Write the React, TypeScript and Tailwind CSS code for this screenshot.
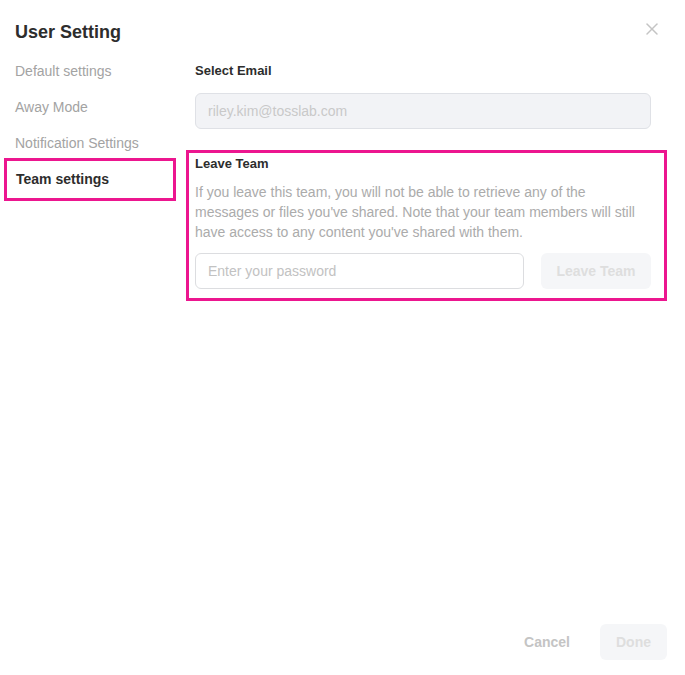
import { X } from "lucide-react";

const menu = ["Default settings", "Away Mode", "Notification Settings"];

export default function App() {
  return (
    <div
      className="relative w-[685px] h-[675px] bg-white text-[#333]"
      style={{ fontFamily: "'Liberation Sans', Arial, sans-serif" }}
    >
      <button className="absolute right-[23px] top-[19px] text-[#c4c4c4]">
        <X size={20} strokeWidth={1.8} />
      </button>

      <h1 className="pl-[15px] pt-[21px] text-[18px] font-bold leading-[22px] text-[#2d2d2d]">
        User Setting
      </h1>

      <div className="flex mt-[10px]">
        {/* left menu */}
        <nav className="w-[186px] flex flex-col">
          {menu.map((m) => (
            <div key={m} className="pl-[15px] h-[36px] flex items-center text-[14px] text-[#a3a3a3]">
              {m}
            </div>
          ))}
          <div className="ml-[4px] -mt-[3px] w-[172px] h-[43px] border-[3px] border-[#ec168f] flex items-center pl-[9px] text-[14px] font-bold text-[#2d2d2d]">
            Team settings
          </div>
        </nav>

        {/* settings pane */}
        <div className="flex-1 pr-[18px]">
          <div className="pl-[9px] pr-[16px]">
            <div className="h-[36px] flex items-center text-[13px] font-bold text-[#2d2d2d]">
              Select Email
            </div>
            <div className="mt-[4px] h-[36px] rounded-[6px] border border-[#dfe1e6] bg-[#f2f3f6] flex items-center px-[12px] text-[14px] text-[#c9c9c9]">
              riley.kim@tosslab.com
            </div>
          </div>

          <div className="mt-[21px] border-[3px] border-[#ec168f] pl-[6px] pr-[13px] pt-[1px] pb-[9px]">
            <div className="text-[13px] font-bold leading-[20px] text-[#2d2d2d]">Leave Team</div>
            <p className="mt-[8px] text-[14px] leading-[20px] text-[#ababab]">
              If you leave this team, you will not be able to retrieve any of the messages or files you've
              shared. Note that your team members will still have access to any content you've shared with
              them.
            </p>
            <div className="mt-[11px] flex gap-[17px]">
              <input
                placeholder="Enter your password"
                className="w-[329px] h-[36px] rounded-[6px] border border-[#dcdde0] px-[12px] text-[14px] outline-none placeholder:text-[#c2c2c2]"
              />
              <button className="flex-1 h-[36px] rounded-[6px] bg-[#f5f6f8] text-[14px] font-bold text-[#dedede]">
                Leave Team
              </button>
            </div>
          </div>
        </div>
      </div>

      <div className="absolute right-[18px] bottom-[15px] flex items-center gap-[30px]">
        <button className="text-[14px] font-bold text-[#c4c4c4]">Cancel</button>
        <button className="w-[67px] h-[36px] rounded-[6px] bg-[#f5f6f8] text-[14px] font-bold text-[#dedede]">
          Done
        </button>
      </div>
    </div>
  );
}
